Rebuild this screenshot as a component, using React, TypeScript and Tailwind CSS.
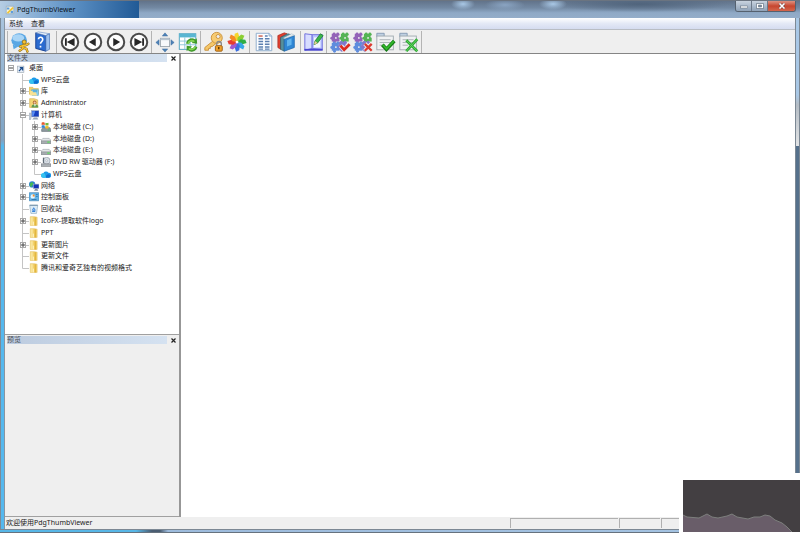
import type { ReactNode } from "react";

type Node = {
  label: string;
  depth: number;
  icon: ReactNode;
  state?: "open" | "closed";
  last?: boolean;
};

/* ---------- small tree icons, 16 unit grid ---------- */

function Small({ children }: { children: ReactNode }) {
  return (
    <svg viewBox="0 0 16 16" className="size-[10px] shrink-0" aria-hidden="true">
      {children}
    </svg>
  );
}

const DesktopIcon = () => (
  <Small>
    <rect x="1" y="5" width="10" height="10" fill="#e6eef8" stroke="#9aa6b2" />
    <path d="M3 13 8 8M4.500 7.500H9V12" fill="none" stroke="#1f4f8f" strokeWidth="2" />
  </Small>
);

const CloudIcon = () => (
  <Small>
    <path d="M4 14a3.500 3.500 0 0 1-.5-7A5 5 0 0 1 12 6a4 4 0 0 1 .5 8z" fill="#1d9bea" />
    <path d="M8 14c-1-4 2-6 5-5.500a3 3 0 0 1 0 5.500z" fill="#0d6fd0" />
    <path d="M0 10.500c0-3 2-4 4-4 3 1 4 5 3 7.500H4c-2 0-4-1-4-3.500z" fill="#35c2f0" />
  </Small>
);

const LibraryIcon = () => (
  <Small>
    <path d="M0 2h6l1 2h8v9H0z" fill="#f0d06a" stroke="#c9a545" strokeWidth=".7" />
    <path d="M4 6h11v9H5z" fill="#8fd0ee" stroke="#4b9cc8" strokeWidth=".8" />
    <path d="M1 8h9l3 7H2z" fill="#f8e292" />
    <path d="M6 6h7v4H6z" fill="#5bb0de" />
  </Small>
);

const UserIcon = () => (
  <Small>
    <path d="M1 1h7l6 2v12H1z" fill="#f3d574" stroke="#c7a03a" strokeWidth=".8" />
    <circle cx="9" cy="7" r="3" fill="#a9652f" />
    <circle cx="9" cy="7.500" r="1.800" fill="#f0c9a0" />
    <path d="M4 15c0-4 2-5 5-5s6 1 6 5z" fill="#5d9a52" />
    <path d="M8 10h3l-1.500 4z" fill="#fff" />
  </Small>
);

const ComputerIcon = () => (
  <Small>
    <rect x="4" y="1" width="12" height="10" fill="#173fbf" stroke="#a3aebf" />
    <path d="M5 2h5l-3 8H5z" fill="#5a8ff2" />
    <path d="M0 5h3v10H0z" fill="#c9d3de" stroke="#8290a1" strokeWidth=".7" />
    <path d="M8 12h5l2 3H5z" fill="#98a6b6" />
  </Small>
);

const SystemDriveIcon = () => (
  <Small>
    <path d="M1 12 3 9h11l2 3v3H1z" fill="#8f9aa0" stroke="#4f5a60" strokeWidth=".8" />
    <rect x="11" y="12" width="3" height="1.500" fill="#49c94a" />
    <path d="M1 1c2-1 3-1 5 0v4c-2-1-3-1-5 0z" fill="#e5582c" />
    <path d="M7 1c2 1 3 1 5 0v4c-2 1-3 1-5 0z" fill="#74b740" />
    <path d="M1 6c2-1 3-1 5 0v4c-2-1-3-1-5 0z" fill="#2e84d6" />
    <path d="M7 6c2 1 3 1 5 0v4c-2 1-3 1-5 0z" fill="#f2bd24" />
  </Small>
);

const DriveIcon = () => (
  <Small>
    <path d="M3 7h10l3 3v5H0v-5z" fill="#e2e5e7" stroke="#969ca0" strokeWidth=".9" />
    <path d="M0 11h16v4H0z" fill="#aab0b4" stroke="#71787c" strokeWidth=".8" />
    <rect x="10" y="12" width="4" height="2" fill="#5be05b" />
  </Small>
);

const DvdIcon = () => (
  <Small>
    <circle cx="9" cy="6" r="5.500" fill="#d8dfe6" stroke="#8a949e" />
    <circle cx="9" cy="6" r="1.500" fill="#fff" stroke="#8a949e" strokeWidth=".7" />
    <path d="M0 11h16v4H0z" fill="#b0b6ba" stroke="#73797d" />
    <path d="M4 1v9" stroke="#5f6a74" strokeWidth="2" />
  </Small>
);

const NetworkIcon = () => (
  <Small>
    <circle cx="5" cy="5.500" r="5" fill="#2d7fd6" />
    <path d="M2 3c2-2 5-1 5 1S4 7 4 10C1 9 0 5 2 3z" fill="#45b956" />
    <rect x="7" y="5" width="9" height="7" fill="#1533b8" stroke="#a3aebf" />
    <path d="M10 12.500h3l2 3H8z" fill="#7f8ea2" />
  </Small>
);

const PanelIcon = () => (
  <Small>
    <rect x="0" y="1" width="16" height="13" rx="1" fill="#64b4e6" stroke="#3d7fb0" />
    <circle cx="6" cy="7" r="3.500" fill="#e8f6ff" />
    <path d="M6 7V3.500A3.500 3.500 0 0 1 9.500 7z" fill="#f08d2e" />
    <path d="M11 4h3M11 7h3M4 12h8" stroke="#1d5a94" />
  </Small>
);

const BinIcon = () => (
  <Small>
    <path d="M1 2h13l-2 13H3z" fill="#dcebf5" stroke="#88a6bc" />
    <path d="M1 2h13" stroke="#6d8ca3" strokeWidth="1.500" />
    <path d="m5.500 10 2-4 2.500 4zM5 12h5" fill="none" stroke="#2f7ed8" strokeWidth="1.500" />
  </Small>
);

const FolderIcon = () => (
  <Small>
    <path d="M2 1h7l4 1v13H2z" fill="#f3d26c" stroke="#dcb95a" strokeWidth=".8" />
    <path d="M2.500 2H6v13H2.500z" fill="#f9e59b" />
    <path d="M10 2v13" stroke="#e0b23c" strokeWidth="2" />
    <path d="M7 9v6" stroke="#fff4c8" strokeWidth="1.500" />
  </Small>
);

const tree: Node[] = [
  { label: "桌面", depth: 0, icon: <DesktopIcon />, state: "open" },
  { label: "WPS云盘", depth: 1, icon: <CloudIcon /> },
  { label: "库", depth: 1, icon: <LibraryIcon />, state: "closed" },
  { label: "Administrator", depth: 1, icon: <UserIcon />, state: "closed" },
  { label: "计算机", depth: 1, icon: <ComputerIcon />, state: "open" },
  { label: "本地磁盘 (C:)", depth: 2, icon: <SystemDriveIcon />, state: "closed" },
  { label: "本地磁盘 (D:)", depth: 2, icon: <DriveIcon />, state: "closed" },
  { label: "本地磁盘 (E:)", depth: 2, icon: <DriveIcon />, state: "closed" },
  { label: "DVD RW 驱动器 (F:)", depth: 2, icon: <DvdIcon />, state: "closed" },
  { label: "WPS云盘", depth: 2, icon: <CloudIcon />, last: true },
  { label: "网络", depth: 1, icon: <NetworkIcon />, state: "closed" },
  { label: "控制面板", depth: 1, icon: <PanelIcon />, state: "closed" },
  { label: "回收站", depth: 1, icon: <BinIcon /> },
  { label: "IcoFX-提取软件logo", depth: 1, icon: <FolderIcon />, state: "closed" },
  { label: "PPT", depth: 1, icon: <FolderIcon /> },
  { label: "更新图片", depth: 1, icon: <FolderIcon />, state: "closed" },
  { label: "更新文件", depth: 1, icon: <FolderIcon /> },
  { label: "腾讯和爱奇艺独有的视频格式", depth: 1, icon: <FolderIcon />, last: true },
];

// The connector and the +/- box in front of a row
function Branch({ node }: { node: Node }) {
  return (
    <svg viewBox="0 0 12 12" className="size-3 shrink-0" aria-hidden="true">
      {node.depth > 0 && (
        <path d={node.last ? "M5.500 0V6.500H12" : "M5.500 0V12M5.500 6.500H12"} stroke="#c4c4c4" fill="none" />
      )}
      {node.state && (
        <>
          <rect x="3.500" y="3.500" width="5" height="5" fill="#fff" stroke="#a8a8a8" />
          <path d={node.state === "closed" ? "M4 6h4M6 4v4" : "M4 6h4"} stroke="#444" />
        </>
      )}
    </svg>
  );
}

function TreeRow({ node }: { node: Node }) {
  return (
    <li role="treeitem" aria-level={node.depth + 1} className="flex min-h-0 flex-1 items-center">
      {node.depth > 0 && <span className="w-3 shrink-0" />}
      {node.depth > 1 && (
        <span className="flex w-3 shrink-0 self-stretch pl-[5px]">
          <span className="w-px bg-[#c4c4c4]" />
        </span>
      )}
      <Branch node={node} />
      {node.icon}
      <span className="pl-0.5 leading-3 whitespace-nowrap">{node.label}</span>
    </li>
  );
}

/* ---------- toolbar icons, 24 unit grid ---------- */

function Big({ children }: { children: ReactNode }) {
  return (
    <svg viewBox="0 0 24 24" className="size-[22px]" aria-hidden="true">
      {children}
    </svg>
  );
}

function Round({ children }: { children: ReactNode }) {
  return (
    <Big>
      <circle cx="12" cy="12" r="9" fill="#fdfdfd" stroke="#4a4a4a" strokeWidth="2.200" />
      <g fill="#262626">{children}</g>
    </Big>
  );
}

const AboutIcon = () => (
  <Big>
    <ellipse cx="10" cy="10" rx="8.500" ry="7.500" fill="#5aa7e4" />
    <ellipse cx="9" cy="7.500" rx="6.500" ry="4" fill="#a9d5f6" />
    <path d="m3 15 1 5 5-3z" fill="#5aa7e4" />
    <circle cx="15.500" cy="12" r="2.200" fill="#f5c02c" stroke="#8b6510" strokeWidth=".8" />
    <path d="m11 17 4-1.500h2l3-1.500M14.500 16l-1 3.500-3 2M15 18.500l3 1 1 3" fill="none" stroke="#8b6510" strokeWidth="2.600" strokeLinecap="round" />
    <path d="m11 17 4-1.500h2l3-1.500M14.500 16l-1 3.500-3 2M15 18.500l3 1 1 3" fill="none" stroke="#f7c431" strokeWidth="1.500" strokeLinecap="round" />
  </Big>
);

const HelpIcon = () => (
  <Big>
    <path d="m3 2 11 3v17L3 19z" fill="#2a6bd0" stroke="#173f91" />
    <path d="m3 2 3-1 12 2-4 2z" fill="#eaf2fb" stroke="#6b8fc5" strokeWidth=".7" />
    <path d="m14 5 4-2v17l-4 2z" fill="#9cc0ee" stroke="#3c6bb4" strokeWidth=".7" />
    <path d="M6 9c0-3.500 5.500-2.500 4.500 1-.4 1.600-2.300 1.700-2.300 4M8.200 16v2" fill="none" stroke="#fff" strokeWidth="1.800" />
  </Big>
);

const FullScreenIcon = () => (
  <Big>
    <rect x="7" y="8" width="10" height="9" fill="#f7f9fb" stroke="#9ba5ae" />
    <path d="M7 8h10v2H7z" fill="#b7c4cf" />
    <path d="m12 2 3 3.500H9zM12 23l3-3.500H9zM2 12.500l3.500-3v6zM22 12.500l-3.500-3v6z" fill="#4f83b8" stroke="#3a6a9c" strokeWidth=".5" />
  </Big>
);

const RefreshIcon = () => (
  <Big>
    <rect x="2.500" y="3" width="18" height="17" fill="#fff" stroke="#4aa0bd" />
    <path d="M2.500 3h18v4h-18z" fill="#59b6d2" />
    <path d="M3 11h17M3 15h17M8.500 7v13M14.500 7v13" stroke="#8ac4d6" />
    <path d="M11.500 14c1-5 6-5 8-3M20.500 17c-1 4-6 5-8 2" fill="none" stroke="#3f9a2a" strokeWidth="3.500" />
    <path d="m21.500 8 .5 6-6-1zM10.500 22v-6l6 1z" fill="#3f9a2a" />
    <path d="M12 14c1-4 5-4 7-2.500M20 17c-1 3-5 4-7 2" fill="none" stroke="#83d652" strokeWidth="1.800" />
  </Big>
);

const KeyIcon = () => (
  <Big>
    <path d="m12 10-10 8v3h4v-2h2v-2h2l5-4z" fill="#f5c768" stroke="#c9913a" />
    <circle cx="15" cy="7.500" r="6" fill="#f8cc72" stroke="#c9913a" />
    <circle cx="16.500" cy="6" r="2.200" fill="#efefef" stroke="#c9913a" />
    <path d="M15 16v-2a2.500 2.500 0 0 1 5 0v2" fill="none" stroke="#888" strokeWidth="1.500" />
    <rect x="13.500" y="16" width="7.500" height="6" rx="1" fill="#f0a02a" stroke="#995c10" />
    <path d="M17.200 17.500V20" stroke="#553300" strokeWidth="1.500" />
  </Big>
);

const petals = [
  { turn: 0, fill: "#f6d62b" },
  { turn: 45, fill: "#8ccf32" },
  { turn: 90, fill: "#2fae45" },
  { turn: 135, fill: "#37a7e8" },
  { turn: 180, fill: "#3a6fe0" },
  { turn: 225, fill: "#a05ad0" },
  { turn: 270, fill: "#e63c30" },
  { turn: 315, fill: "#f58a23" },
];

const PetalsIcon = () => (
  <Big>
    {petals.map((p) => (
      <path
        key={p.turn}
        d="M12 12 9 8 9.500 3l3.500-1.500L14.500 6z"
        fill={p.fill}
        transform={`rotate(${p.turn} 12 12)`}
      />
    ))}
    <circle cx="12" cy="12" r="1.500" fill="#fff" />
  </Big>
);

const ListIcon = () => (
  <Big>
    <path d="M3.500 2.500h14l3 3v16h-17z" fill="#fbfdff" stroke="#8aaacb" />
    <path d="M17.500 2.500v3h3" fill="#d4e3f2" stroke="#8aaacb" />
    <path d="M6 5.500h4.500" stroke="#ca5a48" strokeWidth="1.500" />
    <path d="M6 8.500h5M13 8.500h5M6 11.500h5M13 11.500h5M6 14.500h5M13 14.500h5M6 17.500h5M13 17.500h5M6 19.800h5M13 19.800h5M13 5.500h3" stroke="#5c80b0" strokeWidth="1.500" />
  </Big>
);

const BooksIcon = () => (
  <Big>
    <path d="m2 5 7-3 3 1-7 4v13l-3-2z" fill="#e0402f" stroke="#a3281c" strokeWidth=".7" />
    <path d="m5 7 8-4 3 1-7 4v14l-4-2z" fill="#56909c" stroke="#285663" strokeWidth=".7" />
    <path d="m9 9 11-4v13L9 22z" fill="#2f86d4" stroke="#1d65aa" strokeWidth=".8" />
    <path d="m9 8.500-1-1 9-4.500 3 1.500z" fill="#e4ecf0" stroke="#8aa4b4" strokeWidth=".4" />
    <path d="m12 10 5-2v7l-5 2z" fill="#62b4ee" />
  </Big>
);

const EditBookIcon = () => (
  <Big>
    <path d="m2 3 8 1v15l-8 2z" fill="#d7dcff" stroke="#6a69dc" />
    <path d="M10 4h11v16l-11-1z" fill="#b9c4ff" stroke="#6a69dc" />
    <path d="M12 7h7v11h-7z" fill="#f4f6ff" />
    <path d="M1.500 20.500h20" stroke="#4846d0" strokeWidth="2" />
    <path d="m12 15 1-4 6-8 3 2-6 8z" fill="#3cb54a" stroke="#17752a" strokeWidth=".8" />
    <path d="m12 15 1-4 3 2z" fill="#efcf97" />
  </Big>
);

function Piece({ x, y, fill }: { x: number; y: number; fill: string }) {
  return (
    <g transform={`translate(${x} ${y})`} fill={fill}>
      <rect x="1" y="1" width="8.500" height="8.500" />
      <circle cx="3.500" cy="1" r="1.500" />
      <circle cx="7.500" cy="1" r="1.500" />
      <circle cx="1" cy="6" r="1.600" />
      <circle cx="4" cy="10" r="1.600" />
      <circle cx="5.500" cy="5.500" r="1" fill="#efefef" />
      <circle cx="9.500" cy="4" r="1.300" fill="#efefef" />
    </g>
  );
}

const Puzzle = () => (
  <>
    <Piece x={2} y={2} fill="#9463b8" />
    <Piece x={12} y={2} fill="#55b455" />
    <Piece x={2} y={12} fill="#5f8ddd" />
    <Piece x={10} y={11} fill="#8078cc" />
  </>
);

const SelectAllIcon = () => (
  <Big>
    <Puzzle />
    <path d="m12.500 16 4 4.500 6-6" fill="none" stroke="#efefef" strokeWidth="4.500" />
    <path d="m12.500 16 4 4.500 6-6" fill="none" stroke="#dc2a20" strokeWidth="3" />
  </Big>
);

const SelectNoneIcon = () => (
  <Big>
    <Puzzle />
    <path d="m14 14 7.500 7.500m0-7.500L14 21.500" fill="none" stroke="#efefef" strokeWidth="4.500" />
    <path d="m14 14 7.500 7.500m0-7.500L14 21.500" fill="none" stroke="#dc3a30" strokeWidth="2.500" />
  </Big>
);

const Sheet = () => (
  <>
    <path d="M2 2.500h8v4H2z" fill="#bfd0e2" stroke="#8299b2" />
    <rect x="2" y="5.500" width="18" height="15" fill="#f0f2f3" stroke="#9fa9af" />
    <path d="M5 9.500h12M5 12.500h12M5 15.500h6" stroke="#a6aeb2" />
  </>
);

const SheetCheckIcon = () => (
  <Big>
    <Sheet />
    <path d="m8 15 4.500 5L21 11" fill="none" stroke="#167a16" strokeWidth="4" />
    <path d="m8.500 15 4 4.500 8-8.500" fill="none" stroke="#32b92c" strokeWidth="2" />
  </Big>
);

const SheetCrossIcon = () => (
  <Big>
    <Sheet />
    <path d="m9 10 12 12M21 9 9 22" fill="none" stroke="#2fa834" strokeWidth="3" />
    <path d="m9 10 12 12M21 9 9 22" fill="none" stroke="#62d862" strokeWidth="1" />
  </Big>
);

type Tool = { name: string; icon: ReactNode };

const groups: Tool[][] = [
  [
    { name: "关于", icon: <AboutIcon /> },
    { name: "帮助", icon: <HelpIcon /> },
  ],
  [
    { name: "第一页", icon: <Round><path d="M6.500 8h2v8h-2zM17 7.500v9L8.500 12z" /></Round> },
    { name: "上一页", icon: <Round><path d="M15 7.500v9L7.500 12z" /></Round> },
    { name: "下一页", icon: <Round><path d="M9 7.500v9l7.500-4.500z" /></Round> },
    { name: "最后一页", icon: <Round><path d="M15.500 8h2v8h-2zM7 7.500v9l8.500-4.500z" /></Round> },
  ],
  [
    { name: "全屏", icon: <FullScreenIcon /> },
    { name: "刷新", icon: <RefreshIcon /> },
  ],
  [
    { name: "密码", icon: <KeyIcon /> },
    { name: "图片", icon: <PetalsIcon /> },
  ],
  [
    { name: "目录", icon: <ListIcon /> },
    { name: "书籍", icon: <BooksIcon /> },
  ],
  [{ name: "编辑", icon: <EditBookIcon /> }],
  [
    { name: "全选", icon: <SelectAllIcon /> },
    { name: "全不选", icon: <SelectNoneIcon /> },
    { name: "确认", icon: <SheetCheckIcon /> },
    { name: "取消", icon: <SheetCrossIcon /> },
  ],
];

function Toolbar() {
  return (
    <div role="toolbar" className="flex h-6 items-center border-b border-[#858585] bg-[#efefef] pl-0.5">
      {groups.map((tools, i) => (
        <div
          key={tools[0].name}
          className={`flex items-center border-l border-[#b4b4b4] ${i === 4 ? "px-0.5" : "px-px"}`}
        >
          {tools.map((tool) => (
            <button key={tool.name} aria-label={tool.name} className="flex h-[22px] w-[23px] items-center justify-center">
              {tool.icon}
            </button>
          ))}
        </div>
      ))}
      <div className="h-[22px] w-px bg-[#b4b4b4]" />
    </div>
  );
}

function PanelHeader({ title }: { title: string }) {
  return (
    <div className="flex h-2 shrink-0 items-center pl-0.5">
      <h2 className="h-2 flex-1 bg-linear-to-r from-[#bccbdf] to-[#d5e2f1] leading-2 text-[#4a4f57]">{title}</h2>
      <button aria-label="关闭" className="flex w-3 items-center justify-center">
        <svg viewBox="0 0 5 5" className="size-[5px]">
          <path d="m.5.5 4 4m0-4-4 4" stroke="#222" strokeWidth="1.200" />
        </svg>
      </button>
    </div>
  );
}

function TitleBar() {
  return (
    <header className="flex h-[18px] shrink-0 items-start justify-between border-t border-[#6b7480] bg-[radial-gradient(ellipse_12px_6px_at_463px_3px,#a9c8e6,transparent),radial-gradient(ellipse_14px_6px_at_553px_3px,#a9c8e6,transparent),radial-gradient(ellipse_20px_6px_at_505px_4px,#8aa4c2,transparent),radial-gradient(ellipse_90px_8px_at_640px_3px,#50647c,transparent),linear-gradient(to_bottom,#62738a,#7389a3_40%,#8fa9c6_70%,#94adc9)]">
      <div className="flex h-full w-[139px] items-center gap-0.5 bg-linear-to-r from-[#b5cde4] via-[#5f93c6] via-50% to-[#205a96] pl-[5px]">
        <svg viewBox="0 0 16 16" className="size-[10px]" aria-hidden="true">
          <path d="M2 2h12v12H2z" fill="#f8f5de" stroke="#8ba0b5" />
          <path d="M3 12 12 3l2 2-9 9z" fill="#f0c434" />
          <path d="M3 4h4v3H3zM9 9h4v4H9z" fill="#5c9de0" />
        </svg>
        <h1 className="leading-4 text-[#0b1420]">PdgThumbViewer</h1>
      </div>
      <div className="mr-1 flex h-[11px] overflow-hidden rounded-b-[3px] border border-t-0 border-[#55616f]">
        <button aria-label="最小化" className="flex w-4 items-center justify-center border-r border-[#6d7989] bg-linear-to-b from-[#c9d3df] to-[#8fa2b8]">
          <svg viewBox="0 0 8 6" className="h-1.5 w-2"><rect x=".5" y="3" width="7" height="2" fill="#fff" stroke="#566373" strokeWidth=".5" /></svg>
        </button>
        <button aria-label="最大化" className="flex w-4 items-center justify-center border-r border-[#6d7989] bg-linear-to-b from-[#c9d3df] to-[#8fa2b8]">
          <svg viewBox="0 0 8 6" className="h-1.5 w-2"><path d="M.5.500h7v5h-7z" fill="#fff" stroke="#566373" strokeWidth=".6" /><path d="M2.500 2h3v2h-3z" fill="#8293a8" stroke="#566373" strokeWidth=".5" /></svg>
        </button>
        <button aria-label="关闭窗口" className="flex w-[27px] items-center justify-center bg-linear-to-b from-[#dd9180] via-[#c6452e] to-[#d4664c]">
          <svg viewBox="0 0 8 6" className="h-1.5 w-2"><path d="m1.500.5 5 5m0-5-5 5" stroke="#6a3a35" strokeWidth="2.500" /><path d="m1.500.5 5 5m0-5-5 5" stroke="#fff" strokeWidth="1.600" /></svg>
        </button>
      </div>
    </header>
  );
}

function StatusBar() {
  return (
    <footer className="flex h-3 shrink-0 items-center bg-[#efefef]">
      <p className="flex-1 pl-px leading-3">欢迎使用PdgThumbViewer</p>
      <div className="flex h-[10px] gap-px">
        <span className="w-[108px] border-t border-l border-[#b0b0b0]" />
        <span className="w-[41px] border-t border-l border-[#b0b0b0]" />
        <span className="w-[134px] border-t border-l border-[#b0b0b0]" />
      </div>
    </footer>
  );
}

function Thumbnail() {
  return (
    <div className="absolute right-0 bottom-0 bg-white pt-[7px] pb-px pl-1">
      <svg viewBox="0 0 117 52" className="h-[52px] w-[117px]" aria-hidden="true">
        <rect width="117" height="52" fill="#433f42" />
        <path
          d="M0 35 4 37 16 38 24 34 29 37 35 38 44 36 49 34 54 37 65 39 71 37 77 37 82 35 87 36 92 40 99 43 104 47 109 52H0z"
          fill="#695d69"
        />
        <path
          d="M0 35 4 37 16 38 24 34 29 37 35 38 44 36 49 34 54 37 65 39 71 37 77 37 82 35 87 36 92 40 99 43 104 47 109 52"
          fill="none"
          stroke="#7d7f7d"
        />
      </svg>
    </div>
  );
}

export default function App() {
  return (
    <div className="relative flex h-screen flex-col overflow-hidden bg-white font-['Noto_Sans','Noto_Sans_CJK_SC',sans-serif] text-[7px] text-[#1c1c1c]">
      <TitleBar />
      <div className="flex min-h-0 flex-1">
        <div className="w-[5px] shrink-0 border-x border-l-[#7d8a98] border-r-[#8894a0] bg-linear-to-b from-[#a9c4de] via-[#7da3c4] via-24% to-[#55b8ee] to-25%" />
        <div className="flex min-w-0 flex-1 flex-col">
          <nav className="flex h-3 shrink-0 items-center gap-2 border-b border-[#b9bdc4] bg-linear-to-b from-white via-[#e4e9f6] to-[#d5dcf0] pl-1">
            <button className="leading-3">系统</button>
            <button className="leading-3">查看</button>
          </nav>
          <Toolbar />
          <div className="flex min-h-0 flex-1">
            <aside className="flex w-[176px] shrink-0 flex-col border-r-2 border-[#979797] bg-white">
              <section className="flex min-h-0 flex-1 flex-col border-b border-[#a0a0a0]">
                <PanelHeader title="文件夹" />
                <ul role="tree" className="flex h-[212px] flex-col">
                  {tree.map((node, i) => (
                    <TreeRow key={i} node={node} />
                  ))}
                </ul>
              </section>
              <section className="flex h-[182px] shrink-0 flex-col border-b border-[#a0a0a0] bg-[#efefef] pt-px">
                <PanelHeader title="预览" />
              </section>
            </aside>
            <main className="flex-1 bg-white" />
          </div>
          <StatusBar />
        </div>
        <div className="w-[5px] shrink-0 border-x border-[#7c8894] bg-[linear-gradient(to_bottom,#a9c8e6_15%,#b4bcc4_17%,#e2e4e6_25%,#56718c_25%)]" />
      </div>
      <div className="h-1 shrink-0 border-y border-t-[#7c8894] border-b-[#66727e] bg-[linear-gradient(to_right,#57b6e6_17%,#4a5d72_19%,#4a5d72_20%,#9dbbdc_21%,#a5c4e2)]" />
      <Thumbnail />
    </div>
  );
}
